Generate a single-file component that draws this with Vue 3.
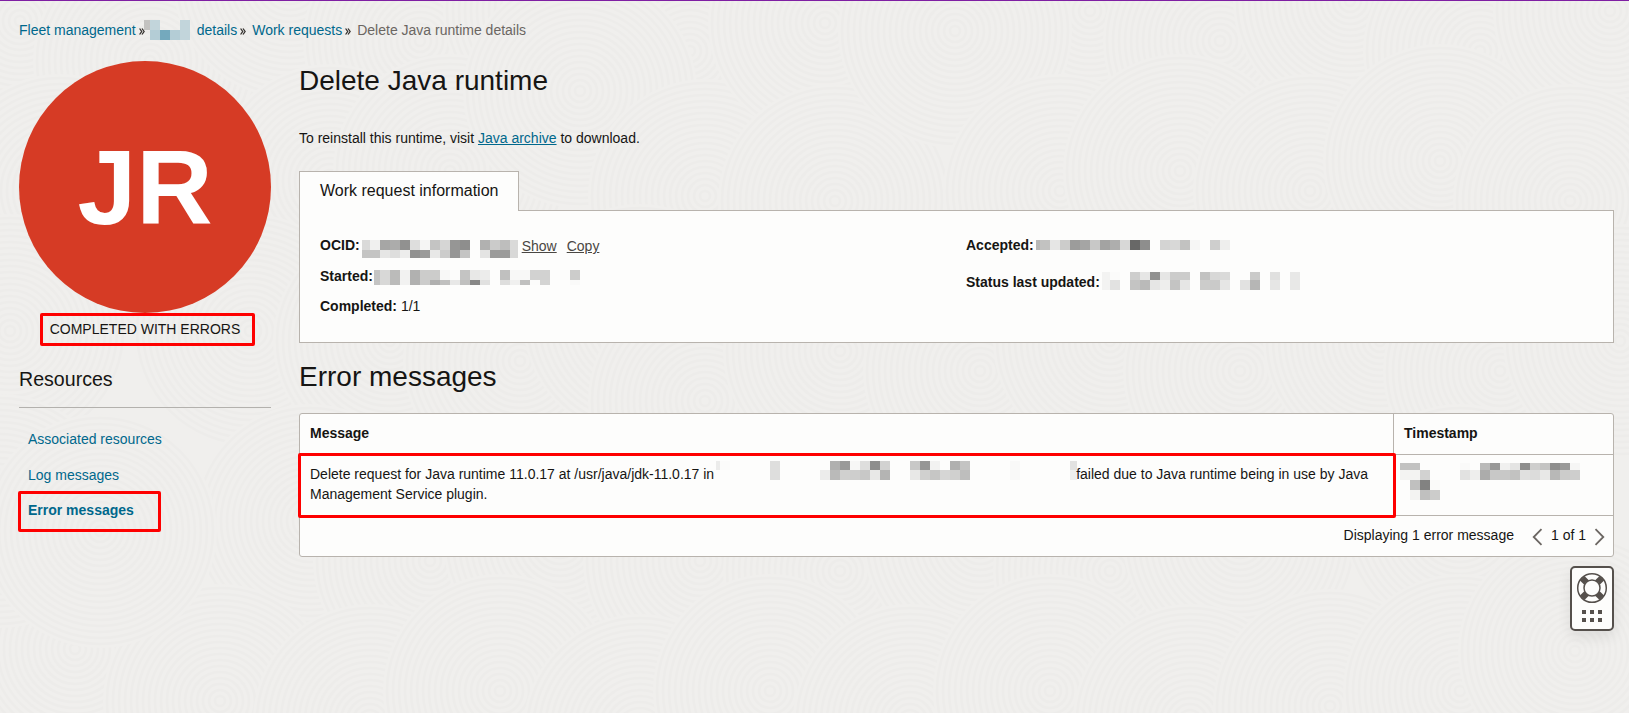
<script setup>
import { h } from 'vue'

// Pixelated block: rows of grey levels, first column may be narrower than the rest.
const Mosaic = (props) => {
  const { first, rows } = props.data
  const cells = []
  let y = 0
  let width = 0
  for (const row of rows) {
    let x = 0
    row.cells.forEach((c, i) => {
      const w = i === 0 ? first : 10
      if (c !== 0) {
        const fill = typeof c === 'string' ? c : `rgb(${c},${c},${c - 1})`
        cells.push(h('rect', { x, y, width: w, height: row.h, fill }))
      }
      x += w
    })
    width = Math.max(width, x)
    y += row.h
  }
  const w = props.data.width || width
  return h('svg', { width: w, height: y, viewBox: `0 0 ${w} ${y}`, 'shape-rendering': 'crispEdges' }, cells)
}
Mosaic.props = ['data']

// Double chevron between breadcrumb entries.
const Sep = () =>
  h('svg', { width: 6, height: 7, viewBox: '0 0 6 7' }, [
    h('path', { d: 'M.6.5 2.7 3.5.6 6.5M3 .5l2.1 3L3 6.5', fill: 'none', stroke: '#33302d', 'stroke-width': 1.3 }),
  ])

const fleet = {
  first: 6,
  rows: [
    { h: 10, cells: ['#c3c2c0', '#c2d5db', 0, 0, '#c2d5db'] },
    { h: 10, cells: [0, '#b4cdd6', '#74a9bd', '#b4cdd6', '#c2d5db'] },
  ],
}
const ocid = {
  first: 8,
  width: 156,
  rows: [
    { h: 10, cells: [218, 240, 166, 172, 145, 222, 245, 196, 214, 150, 142, 0, 177, 203, 190, 218] },
    { h: 8, cells: [196, 196, 230, 222, 237, 145, 154, 232, 204, 150, 196, 0, 228, 155, 155, 216] },
  ],
}
const started = {
  first: 6,
  rows: [
    { h: 10, cells: [196, 216, 187, 242, 177, 204, 204, 248, 252, 196, 232, 236, 0, 192, 248, 248, 210, 210, 0, 252, 204] },
    { h: 5, cells: [196, 216, 187, 242, 177, 204, 176, 192, 232, 192, 136, 225, 0, 222, 240, 192, 252, 212, 0, 0, 250] },
  ],
}
const accepted = {
  first: 4,
  rows: [
    { h: 10, cells: [184, 194, 230, 204, 156, 165, 200, 163, 174, 216, 104, 142, 0, 212, 216, 194, 246, 0, 206, 238] },
  ],
}
const updated = {
  first: 8,
  rows: [
    { h: 8, cells: [243, 251, 0, 206, 230, 145, 230, 204, 204, 0, 194, 216, 218, 0, 253, 202, 0, 224, 0, 232] },
    { h: 10, cells: [243, 226, 0, 196, 186, 230, 238, 196, 230, 0, 204, 202, 230, 0, 226, 182, 0, 230, 0, 232] },
  ],
}
const host = {
  first: 4,
  width: 361,
  rows: [
    { h: 9, cells: [236, 251, 0, 0, 0, 0, 222, 0, 0, 0, 0, 0, 176, 154, 247, 222, 142, 210, 0, 0, 200, 150, 242, 0, 176, 196, 0, 0, 0, 0, 249, 0, 0, 0, 0, 0, 226] },
    { h: 10, cells: [0, 0, 0, 0, 0, 0, 222, 0, 0, 0, 0, 236, 186, 208, 206, 200, 232, 180, 0, 0, 232, 208, 198, 214, 208, 190, 0, 0, 0, 0, 249, 0, 0, 0, 0, 0, 238] },
  ],
}
const stamp = {
  first: 10,
  rows: [
    { h: 7, cells: [194, 194, 0, 0, 0, 0, 250, 0, 186, 152, 240, 228, 142, 206, 196, 142, 154, 246] },
    { h: 10, cells: [243, 243, 210, 0, 0, 0, 226, 238, 172, 200, 200, 194, 224, 220, 232, 184, 204, 206] },
    { h: 10, cells: [0, 192, 130, 250] },
    { h: 10, cells: [0, 243, 192, 204] },
  ],
}

// Overlapping ripple discs of the page texture, painted back to front.
const discs = [
  [20, 20], [150, 60], [290, -20], [420, 40], [560, 10], [690, 50], [1090, 10], [1220, 40], [1350, 0], [1480, 50], [1610, 10],
  [60, 190], [200, 240], [330, 180], [450, 170], [580, 90], [705, 195], [825, 22], [835, 200], [955, 30], [1060, 190], [1180, 170], [1310, 190], [1440, 160], [1570, 200],
  [10, 330], [250, 330], [390, 340], [520, 360], [640, 320], [705, 400], [840, 350], [980, 370], [1110, 340], [1240, 370], [1380, 340], [1500, 370], [1620, 340],
  [310, 520], [430, 560], [560, 540], [700, 560], [840, 570], [980, 540], [1110, 570], [1240, 540], [1460, 520],
  [75, 648], [220, 700], [0, 510], [100, 530], [370, 720], [500, 690], [640, 730], [770, 690], [910, 720], [1050, 690], [1190, 720], [1330, 705], [1460, 690], [1575, 650],
]
const rings = Array.from({ length: 19 }, (_, i) => 5 + i * 6)
const resources = [
  { label: 'Associated resources', active: false },
  { label: 'Log messages', active: false },
  { label: 'Error messages', active: true },
]
</script>

<template>
  <div class="page">
    <svg class="texture" width="1629" height="713" viewBox="0 0 1629 713">
      <g v-for="(d, i) in discs" :key="i">
        <circle :cx="d[0]" :cy="d[1]" r="117" fill="#f0efed" />
        <circle v-for="r in rings" :key="r" :cx="d[0]" :cy="d[1]" :r="r" fill="none" stroke="#edecea" stroke-width="2.6" />
      </g>
    </svg>

    <nav class="crumbs">
      <a>Fleet management</a><Sep class="sep s1" />
      <Mosaic :data="fleet" />
      <a class="details">details</a><Sep class="sep s2" />
      <a>Work requests</a><Sep class="sep s2" />
      <span class="here">Delete Java runtime details</span>
    </nav>

    <div class="body">
      <aside>
        <div class="avatar">JR</div>
        <div class="status"><span>COMPLETED WITH ERRORS</span><i class="mark mark-status"></i></div>
        <h3>Resources</h3>
        <ul>
          <li v-for="r in resources" :key="r.label" :class="{ active: r.active }">
            <a>{{ r.label }}</a><i v-if="r.active" class="mark mark-nav"></i>
          </li>
        </ul>
      </aside>

      <main>
        <h1>Delete Java runtime</h1>
        <p class="intro">To reinstall this runtime, visit <a>Java archive</a> to download.</p>

        <div class="tab">Work request information</div>
        <section class="panel">
          <div class="col">
            <div class="row r-ocid"><b>OCID:</b><Mosaic :data="ocid" class="m-ocid" /><a class="show">Show</a><a class="copy">Copy</a></div>
            <div class="row r-started"><b>Started:</b><Mosaic :data="started" class="m-started" /></div>
            <div class="row"><b>Completed:</b>&nbsp;1/1</div>
          </div>
          <div class="col">
            <div class="row r-accepted"><b>Accepted:</b><Mosaic :data="accepted" class="m-accepted" /></div>
            <div class="row"><b>Status last updated:</b><Mosaic :data="updated" class="m-updated" /></div>
          </div>
        </section>

        <h2>Error messages</h2>
        <section class="table">
          <div class="tr head">
            <div class="th">Message</div>
            <div class="th second">Timestamp</div>
          </div>
          <div class="tr data">
            <div class="td">
              <div class="line"><span class="lead">Delete request for Java runtime 11.0.17 at /usr/java/jdk-11.0.17 in</span><Mosaic :data="host" class="m-host" /><span>failed due to Java runtime being in use by Java</span></div>
              <div class="line">Management Service plugin.</div>
            </div>
            <div class="td second"><Mosaic :data="stamp" class="m-stamp" /></div>
            <i class="mark mark-row"></i>
          </div>
          <div class="foot">
            <span class="count">Displaying 1 error message</span>
            <svg class="chev" width="11" height="18" viewBox="0 0 11 18"><path d="M9.5 1.2 1.7 9l7.8 7.8" /></svg>
            <span class="pos">1 of 1</span>
            <svg class="chev" width="11" height="18" viewBox="0 0 11 18"><path d="M1.5 1.2 9.3 9l-7.8 7.8" /></svg>
          </div>
        </section>

        <div class="help">
          <svg width="40" height="61" viewBox="0 0 40 61">
            <g fill="none" stroke="#55504c">
              <path stroke-width="6.4" d="M10.2 10.2l4.6 4.6M29.8 10.2l-4.6 4.6M10.2 29.8l4.6-4.6M29.8 29.8l-4.6-4.6" />
              <circle cx="20" cy="20" r="14.3" stroke-width="1.5" />
              <circle cx="20" cy="20" r="8" stroke-width="1.5" fill="#fdfdfc" />
            </g>
            <g fill="#55504c">
              <path d="M10 42h4v4h-4zM18 42h4v4h-4zM26 42h4v4h-4zM10 50h4v4h-4zM18 50h4v4h-4zM26 50h4v4h-4z" />
            </g>
          </svg>
        </div>
      </main>
    </div>
  </div>
</template>

<style>
body { margin: 0; background: #f0efed; }
</style>

<style scoped>
.page {
  position: relative;
  box-sizing: border-box;
  width: 1629px;
  height: 713px;
  overflow: hidden;
  border-top: 1px solid #7f1fa3;
  background: #f0efed;
  color: #161513;
  font: 14px/20px "Liberation Sans", Arial, sans-serif;
}
.texture { position: absolute; left: 0; top: 0; }
svg { display: block; flex: none; }
a { color: #00688c; }
h1, h2, h3, p, ul { margin: 0; padding: 0; font-weight: 400; list-style: none; }

.crumbs { position: relative; display: flex; height: 20px; padding: 19px 0 0 19px; white-space: nowrap; }
.sep { margin-top: 8px; }
.s1 { margin-left: 3px; margin-right: -1px; }
.s2 { margin-left: 3px; margin-right: 6px; }
.details { margin-left: 7px; }
.here { color: #6b6662; }

.body { position: relative; display: grid; grid-template-columns: 252px 1315px; column-gap: 28px; padding: 21px 0 0 19px; }

.avatar {
  width: 252px;
  height: 252px;
  border-radius: 50%;
  background: #d63b25;
  color: #fff;
  font-size: 105.8px;
  font-weight: 700;
  line-height: 252px;
  text-align: center;
}
.status { position: relative; height: 20px; padding-top: 6px; text-align: center; }
h3 { margin-top: 28px; padding-bottom: 16px; border-bottom: 1px solid #b3b1ad; font-size: 19.6px; line-height: 24px; }
ul { padding-top: 21px; }
li { position: relative; height: 36px; padding-left: 9px; }
li.active { margin-top: -1px; font-weight: 700; }

.mark { position: absolute; box-sizing: border-box; border: 3px solid #fe0000; border-radius: 2px; }
.mark-status { left: 21px; top: 0; width: 215px; height: 33px; }
.mark-nav { left: -1px; top: -9px; width: 143px; height: 41px; }
.mark-row { left: -2px; top: -2px; width: 1098px; height: 65px; }

main { display: flex; flex-direction: column; }
h1 { margin-top: 4px; font-size: 28px; line-height: 32px; }
.intro { margin-top: 31px; }
.intro a { text-decoration: underline; }
.tab {
  position: relative;
  z-index: 1;
  box-sizing: border-box;
  align-self: flex-start;
  width: 220px;
  height: 40px;
  margin-top: 23px;
  border: 1px solid #b8b3ad;
  border-bottom: 0;
  background: #fdfdfc;
  font-size: 16px;
  line-height: 38px;
  padding-left: 20px;
}
.panel {
  box-sizing: border-box;
  display: grid;
  grid-template-columns: 646px 1fr;
  height: 133px;
  margin-top: -1px;
  padding: 24px 0 0 20px;
  border: 1px solid #b8b3ad;
  background: #fdfdfc;
}
.row { display: flex; height: 30px; }
.r-ocid { height: 31px; }
.r-accepted { height: 37px; }
.m-ocid { margin: 5px 4px 0 2px; }
.m-started { margin: 4px 0 0 1px; }
.m-accepted { margin: 5px 0 0 2px; }
.m-updated { margin: 0 0 0 2px; }
.show, .copy { margin-top: 1px; color: #4a4743; text-decoration: underline; }
.copy { margin-left: 10px; }

h2 { margin-top: 18px; font-size: 28px; line-height: 32px; }
.table {
  box-sizing: border-box;
  height: 144px;
  margin-top: 20px;
  border: 1px solid #b8b3ad;
  border-radius: 3px;
  background: #fdfdfc;
}
.tr { position: relative; box-sizing: border-box; display: grid; grid-template-columns: 1093px 1fr; border-bottom: 1px solid #b8b3ad; }
.head { height: 41px; font-weight: 700; }
.data { height: 61px; }
.th { padding: 9px 0 0 10px; }
.td { padding: 9px 0 0 10px; }
.second { border-left: 1px solid #b8b3ad; }
.line { display: flex; height: 20px; white-space: nowrap; }
.m-host { margin: -3px -.5px 0 1.5px; }
.m-stamp { margin: -1px 0 0 -4px; }
.foot { display: flex; justify-content: flex-end; padding: 9px 8px 0 0; }
.count { margin-right: 18px; }
.pos { margin: 0 8px; }
.chev { margin-top: 3px; fill: none; stroke: #6b6662; stroke-width: 1.8; }

.help {
  box-sizing: border-box;
  align-self: flex-end;
  width: 44px;
  height: 65px;
  margin-top: 9px;
  border: 2px solid #55504c;
  border-radius: 5px;
  background: #fdfdfc;
  box-shadow: 0 6px 14px rgba(0, 0, 0, 0.08);
}
</style>
